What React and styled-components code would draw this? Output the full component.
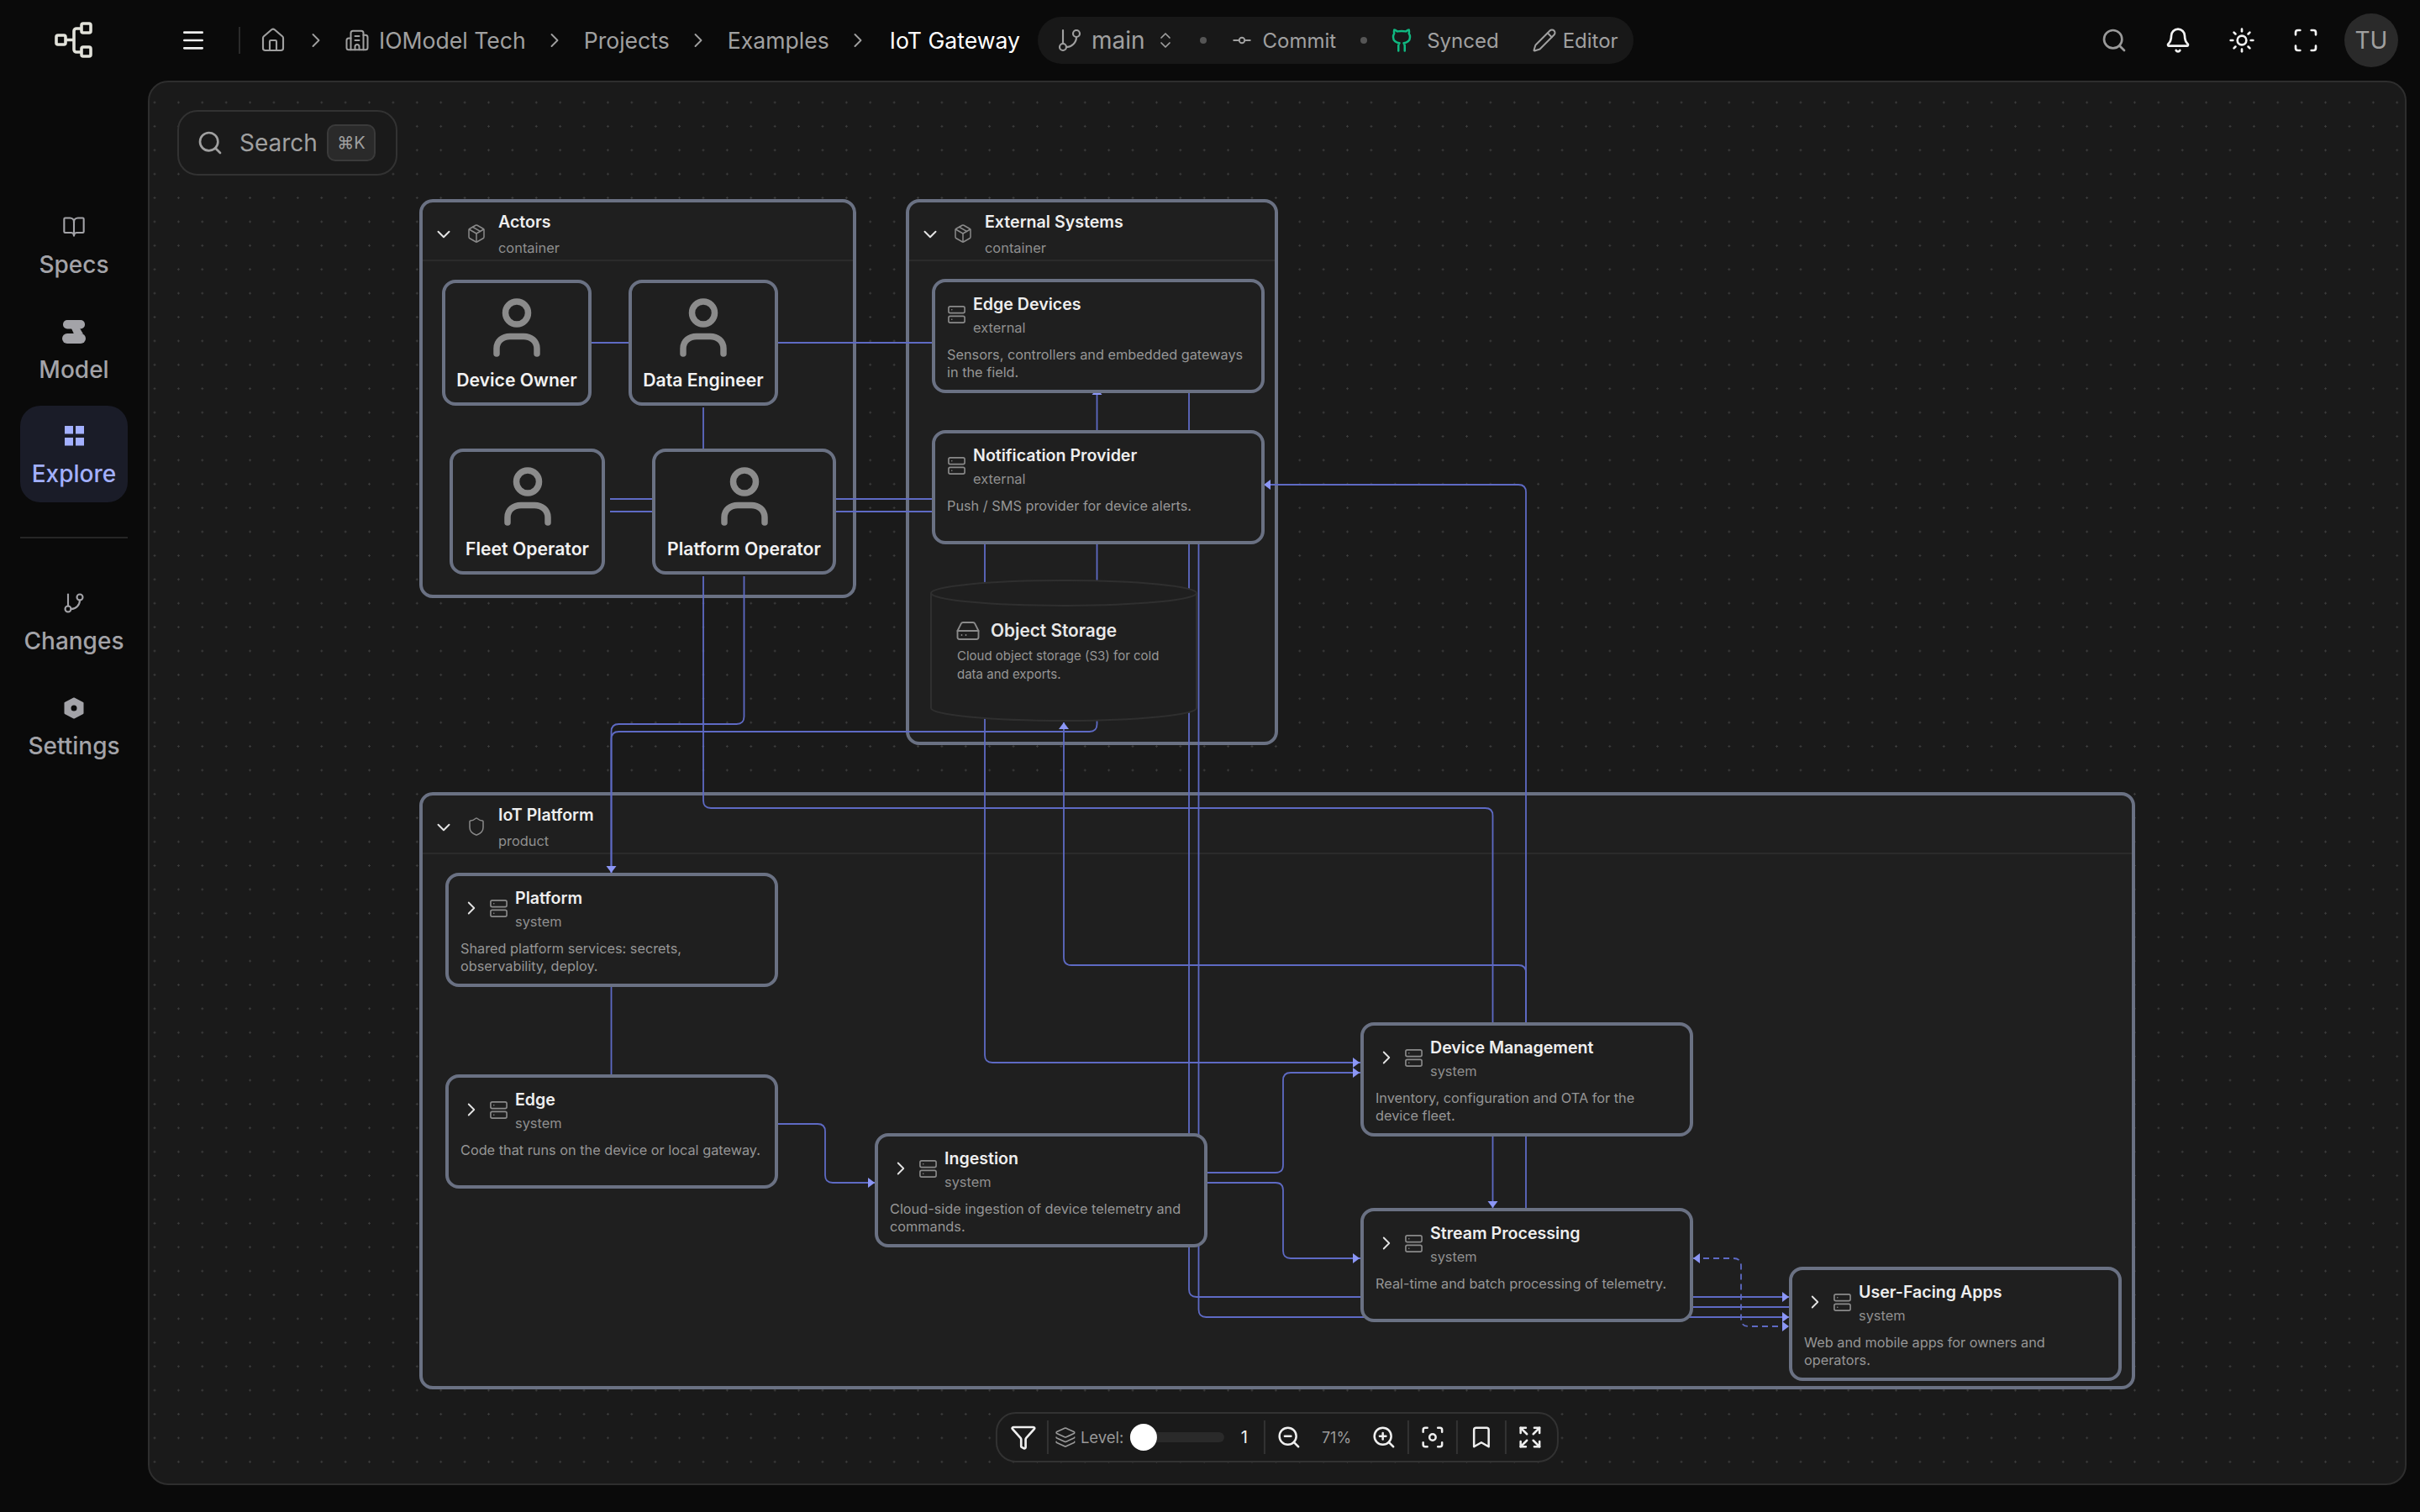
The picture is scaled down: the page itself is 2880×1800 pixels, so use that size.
import React from 'react';
import styled, {createGlobalStyle} from 'styled-components';
import {
    Menu, House, Building2, ChevronRight, ChevronDown, ChevronsUpDown, GitBranch, GitCommitHorizontal,
    Pencil, Search, Bell, Sun, Scan, BookOpen, Funnel, Layers, ZoomIn, ZoomOut, Focus, Bookmark, Expand,
    Package, Shield, Server, HardDrive,
} from 'lucide-react';

const groups = [
    {title: 'Actors', sub: 'container', x: 499, y: 237, w: 520, h: 475, icon: Package},
    {title: 'External Systems', sub: 'container', x: 1078, y: 237, w: 443, h: 650, icon: Package},
    {title: 'IoT Platform', sub: 'product', x: 499, y: 943, w: 2042, h: 711, icon: Shield},
];

const people = [
    {name: 'Device Owner', x: 526, y: 333, w: 178},
    {name: 'Data Engineer', x: 748, y: 333, w: 178},
    {name: 'Fleet Operator', x: 535, y: 534, w: 185},
    {name: 'Platform Operator', x: 776, y: 534, w: 219},
];

const cards = [
    {title: 'Edge Devices', sub: 'external', x: 1109, y: 332, desc: 'Sensors, controllers and embedded gateways in the field.'},
    {title: 'Notification Provider', sub: 'external', x: 1109, y: 512, desc: 'Push / SMS provider for device alerts.'},
    {title: 'Platform', sub: 'system', x: 530, y: 1039, open: true, desc: 'Shared platform services: secrets, observability, deploy.'},
    {title: 'Edge', sub: 'system', x: 530, y: 1279, open: true, desc: 'Code that runs on the device or local gateway.'},
    {title: 'Ingestion', sub: 'system', x: 1041, y: 1349, open: true, desc: 'Cloud-side ingestion of device telemetry and commands.'},
    {title: 'Device Management', sub: 'system', x: 1619, y: 1217, open: true, desc: 'Inventory, configuration and OTA for the device fleet.'},
    {title: 'Stream Processing', sub: 'system', x: 1619, y: 1438, open: true, desc: 'Real-time and batch processing of telemetry.'},
    {title: 'User-Facing Apps', sub: 'system', x: 2129, y: 1508, open: true, desc: 'Web and mobile apps for owners and operators.'},
];

const edges = [
    [[704, 408], [748, 408]],
    [[926, 408], [1109, 408]],
    [[837, 485], [837, 534]],
    [[726, 594], [776, 594]],
    [[726, 609], [776, 609]],
    [[995, 594], [1109, 594]],
    [[995, 609], [1109, 609]],
    [[1305.5, 468], [1305.5, 512]],
    [[1415, 468], [1415, 512]],
    [[1172, 647], [1172, 1265], [1619, 1265]],
    [[1305.5, 647], [1305.5, 871], [727.5, 871], [727.5, 1039]],
    [[885.5, 686], [885.5, 862], [727.5, 862], [727.5, 1039]],
    [[837, 686], [837, 962], [1776.5, 962], [1776.5, 1438]],
    [[1415, 647], [1415, 1544], [2129, 1544]],
    [[1426.5, 647], [1426.5, 1568], [2129, 1568]],
    [[2015, 1556], [2129, 1556]],
    [[1816, 1438], [1816, 577], [1504, 577]],
    [[1266, 860], [1266, 1149], [1816, 1149], [1816, 1217]],
    [[727.5, 1174], [727.5, 1279]],
    [[925, 1338], [982, 1338], [982, 1408], [1041, 1408]],
    [[1435, 1396], [1527, 1396], [1527, 1277], [1619, 1277]],
    [[1435, 1408], [1527, 1408], [1527, 1498], [1619, 1498]],
];

const dashed = [[2015, 1498], [2072, 1498], [2072, 1579], [2129, 1579]];

// tip x, tip y, direction
const arrows = [
    [1618, 1265, 'r'], [1618, 1277, 'r'], [1618, 1498, 'r'],
    [1041, 1408, 'r'], [2129, 1544, 'r'], [2129, 1568, 'r'], [2129, 1579, 'r'],
    [2015, 1498, 'l'], [1504, 577, 'l'],
    [727.5, 1039, 'd'], [1776.5, 1438, 'd'],
    [1266, 860, 'u'], [1305.5, 462, 'u'],
];

const route = (pts, r = 9) => {
    let d = `M${pts[0][0]} ${pts[0][1]}`;
    for (let i = 1; i < pts.length; i++) {
        const [x, y] = pts[i];
        if (i === pts.length - 1) {
            d += ` L${x} ${y}`;
            break;
        }
        const [px, py] = pts[i - 1];
        const [nx, ny] = pts[i + 1];
        const inX = Math.sign(x - px), inY = Math.sign(y - py);
        const outX = Math.sign(nx - x), outY = Math.sign(ny - y);
        d += ` L${x - inX * r} ${y - inY * r} Q${x} ${y} ${x + outX * r} ${y + outY * r}`;
    }
    return d;
};

const arrowPoints = ([x, y, dir]) => {
    if (dir === 'r') return `${x},${y} ${x - 8},${y - 6} ${x - 8},${y + 6}`;
    if (dir === 'l') return `${x},${y} ${x + 8},${y - 6} ${x + 8},${y + 6}`;
    if (dir === 'd') return `${x},${y} ${x - 6},${y - 8} ${x + 6},${y - 8}`;
    return `${x},${y} ${x - 6},${y + 8} ${x + 6},${y + 8}`;
};

const Logo = () => (
    <svg width="48" height="44" viewBox="0 0 48 44" fill="none" stroke="#e2e2da" strokeWidth="3.6" strokeLinejoin="round">
        <rect x="3" y="16" width="11" height="11" rx="2"/>
        <rect x="33" y="2" width="11" height="11" rx="2"/>
        <rect x="33" y="30" width="11" height="11" rx="2"/>
        <path d="M14 21.5h10M33 8h-6a3 3 0 0 0-3 3v22a3 3 0 0 0 3 3h6"/>
    </svg>
);

const GithubIcon = () => (
    <svg width="30" height="30" viewBox="0 0 24 24" fill="none" stroke="#10b981" strokeWidth="2" strokeLinecap="round" strokeLinejoin="round">
        <path d="M15 22v-4a4.8 4.8 0 0 0-1-3.5c3 0 6-2 6-5.5.08-1.25-.27-2.48-1-3.5.28-1.15.28-2.35 0-3.5 0 0-1 0-3 1.5-2.64-.5-5.36-.5-8 0C6 2 5 2 5 2c-.3 1.15-.3 2.35 0 3.5A5.403 5.403 0 0 0 4 9c0 3.5 3 5.5 6 5.5-.39.49-.68 1.05-.85 1.65-.17.6-.22 1.23-.15 1.85v4"/>
    </svg>
);

const ModelIcon = () => (
    <svg width="28" height="28" viewBox="0 0 28 28" fill="currentColor">
        <rect x="1" y="0" width="26" height="10.500" rx="5"/>
        <rect x="0" y="16" width="28" height="12" rx="6"/>
        <path d="M11 10h10l4 6.500H14z"/>
    </svg>
);

const ExploreIcon = () => (
    <svg width="28" height="28" viewBox="0 0 28 28" fill="currentColor">
        <rect x="3" y="2" width="10" height="9.5"/>
        <rect x="16" y="2" width="10" height="9.5"/>
        <rect x="3" y="16" width="10" height="9.5"/>
        <rect x="16" y="16" width="10" height="9.5"/>
    </svg>
);

const SettingsIcon = () => (
    <svg width="28" height="28" viewBox="0 0 28 28" fill="currentColor">
        <path fillRule="evenodd" stroke="currentColor" strokeWidth="2" strokeLinejoin="round"
              d="M14 2.5 24.5 8v12L14 25.500 3.500 20V8zM14 9.500a4.500 4.500 0 1 0 0 9 4.500 4.500 0 0 0 0-9z"/>
    </svg>
);

const PersonIcon = () => (
    <svg width="64" height="70" viewBox="0 0 64 70" fill="none" stroke="#8b8b8b" strokeWidth="7.500" strokeLinecap="round">
        <circle cx="32" cy="17.500" r="13.500"/>
        <path d="M8 66V60C8 51 15 45.500 24 45.500H40C49 45.500 56 51 56 60V66"/>
    </svg>
);

const App = () => {
    return (
        <Page>
            <GlobalStyle/>
            <Sidebar>
                <LogoWrap><Logo/></LogoWrap>
                <Nav>
                    <NavItem><BookOpen size={30} strokeWidth={1.8}/><span>Specs</span></NavItem>
                    <NavItem><ModelIcon/><span>Model</span></NavItem>
                    <NavItem $active><ExploreIcon/><span>Explore</span></NavItem>
                    <NavDivider/>
                    <NavItem><GitBranch size={30} strokeWidth={1.8}/><span>Changes</span></NavItem>
                    <NavItem><SettingsIcon/><span>Settings</span></NavItem>
                </Nav>
            </Sidebar>
            <Main>
                <TopBar>
                    <Menu size={32} color="#efefef"/>
                    <VDivider/>
                    <Crumbs>
                        <House size={32} strokeWidth={1.6}/>
                        <ChevronRight size={28} strokeWidth={1.6}/>
                        <Crumb>
                            <Building2 size={30} strokeWidth={1.6}/>
                            IOModel Tech
                        </Crumb>
                        <ChevronRight size={28} strokeWidth={1.6}/>
                        <Crumb>Projects</Crumb>
                        <ChevronRight size={28} strokeWidth={1.6}/>
                        <Crumb>Examples</Crumb>
                        <ChevronRight size={28} strokeWidth={1.6}/>
                        <Crumb $current>IoT Gateway</Crumb>
                    </Crumbs>
                    <Pill>
                        <GitBranch size={32} strokeWidth={1.6}/>
                        <BranchName>main</BranchName>
                        <ChevronsUpDown size={24} strokeWidth={1.7}/>
                        <PillDot/>
                        <PillItem>
                            <GitCommitHorizontal size={26} strokeWidth={1.8}/>
                            Commit
                        </PillItem>
                        <PillDot $right={26}/>
                        <PillItem $gap={15}>
                            <GithubIcon/>
                            Synced
                        </PillItem>
                        <PillItem $gap={7} $left={39}>
                            <Pencil size={30} strokeWidth={1.6}/>
                            Editor
                        </PillItem>
                    </Pill>
                    <Actions>
                        <IconButton $muted><Search size={32} strokeWidth={2}/></IconButton>
                        <IconButton><Bell size={32} strokeWidth={2}/></IconButton>
                        <IconButton><Sun size={32} strokeWidth={2}/></IconButton>
                        <IconButton><Scan size={32} strokeWidth={2}/></IconButton>
                        <Avatar>TU</Avatar>
                    </Actions>
                </TopBar>
                <Canvas>
                    <Diagram>
                        {groups.map(g => (
                            <GroupBox key={g.title} $x={g.x} $y={g.y} $w={g.w} $h={g.h}>
                                <GroupHeader>
                                    <ChevronDown size={26} color="#e4e4e4" strokeWidth={1.8}/>
                                    <g.icon size={24} color="#8a8a8a" strokeWidth={1.5}/>
                                    <div>
                                        <NodeTitle>{g.title}</NodeTitle>
                                        <GroupSub>{g.sub}</GroupSub>
                                    </div>
                                </GroupHeader>
                            </GroupBox>
                        ))}
                        <EdgeLayer width="2880" height="1800" viewBox="0 0 2880 1800" fill="none">
                            {edges.map((pts, i) => (
                                <path key={i} d={route(pts)} stroke="#5e6ac4" strokeWidth="1.8"/>
                            ))}
                            <path d={route(dashed)} stroke="#5e6ac4" strokeWidth="1.8" strokeDasharray="7 5"/>
                            {arrows.map((a, i) => (
                                <polygon key={i} points={arrowPoints(a)} fill="#8b96f5"/>
                            ))}
                        </EdgeLayer>
                        {people.map(p => (
                            <PersonCard key={p.name} $x={p.x} $y={p.y} $w={p.w}>
                                <PersonIcon/>
                                <PersonName>{p.name}</PersonName>
                            </PersonCard>
                        ))}
                        {cards.map(c => (
                            <Card key={c.title} $x={c.x} $y={c.y}>
                                <CardHeader>
                                    {c.open && <ChevronRight size={26} color="#e4e4e4" strokeWidth={1.7}/>}
                                    <Server size={23} color="#8a8a8a" strokeWidth={1.7}/>
                                    <div>
                                        <NodeTitle>{c.title}</NodeTitle>
                                        <NodeSub>{c.sub}</NodeSub>
                                    </div>
                                </CardHeader>
                                <NodeDesc>{c.desc}</NodeDesc>
                            </Card>
                        ))}
                        <Cylinder>
                            <svg width="318" height="170" viewBox="0 0 318 170" fill="#1f1f1f" stroke="#2f2f2f" strokeWidth="2">
                                <path d="M1 16V153C1 161 72 168 159 168S317 161 317 153V16"/>
                                <ellipse cx="159" cy="16" rx="158" ry="15"/>
                            </svg>
                            <CylinderBody>
                                <CylinderTitle>
                                    <HardDrive size={30} color="#8a8a8a" strokeWidth={1.5}/>
                                    Object Storage
                                </CylinderTitle>
                                <CylinderDesc>Cloud object storage (S3) for cold data and exports.</CylinderDesc>
                            </CylinderBody>
                        </Cylinder>
                    </Diagram>
                    <SearchBox>
                        <Search size={32} strokeWidth={2}/>
                        <span>Search</span>
                        <Kbd>⌘K</Kbd>
                    </SearchBox>
                    <Toolbar>
                        <Funnel size={32} color="#efefef" strokeWidth={2}/>
                        <ToolSep $left={12} $right={7}/>
                        <Layers size={26} strokeWidth={1.5}/>
                        <ToolLabel>Level:</ToolLabel>
                        <Track><Thumb/></Track>
                        <LevelValue>1</LevelValue>
                        <ToolSep/>
                        <ZoomOut size={30} color="#efefef" strokeWidth={2}/>
                        <ZoomValue>71%</ZoomValue>
                        <ZoomIn size={30} color="#efefef" strokeWidth={2}/>
                        <ToolSep/>
                        <Focus size={30} color="#efefef" strokeWidth={2}/>
                        <ToolSep/>
                        <Bookmark size={30} color="#efefef" strokeWidth={2}/>
                        <ToolSep/>
                        <Expand size={30} color="#efefef" strokeWidth={2}/>
                    </Toolbar>
                </Canvas>
            </Main>
        </Page>
    );
};

export default App;

const GlobalStyle = createGlobalStyle`
  html, body {
    margin: 0;
    padding: 0;
    background: #0a0a0a;
  }
  * {
    box-sizing: border-box;
  }
  svg {
    flex-shrink: 0;
  }
`;

const Page = styled.div`
  width: 2880px;
  height: 1800px;
  display: flex;
  background: #0a0a0a;
  font-family: Inter, "Noto Sans", sans-serif;
  overflow: hidden;
`;

const Sidebar = styled.aside`
  width: 176px;
  flex-shrink: 0;
  display: flex;
  flex-direction: column;
  align-items: center;
`;

const LogoWrap = styled.div`
  height: 96px;
  display: flex;
  align-items: center;
  justify-content: center;
`;

const Nav = styled.nav`
  margin-top: 138px;
  display: flex;
  flex-direction: column;
  gap: 9.5px;
`;

const NavItem = styled.div`
  width: 128px;
  height: 115px;
  padding-top: 22px;
  border-radius: 24px;
  display: flex;
  flex-direction: column;
  align-items: center;
  gap: 14px;
  font-size: 28px;
  font-weight: 500;
  line-height: 34px;
  color: ${({$active}) => ($active ? '#a3b0ff' : '#a3a3a8')};
  background: ${({$active}) => ($active ? '#1a1c28' : 'transparent')};

  svg {
    height: 28px;
  }
`;

const NavDivider = styled.div`
  height: 2px;
  background: #262626;
  margin: 31.5px 0;
`;

const Main = styled.div`
  flex: 1;
  min-width: 0;
  display: flex;
  flex-direction: column;
  padding: 0 16px 32px 0;
`;

const TopBar = styled.header`
  height: 96px;
  flex-shrink: 0;
  display: flex;
  align-items: center;
  padding-left: 38px;
  margin-right: -16px;
`;

const VDivider = styled.div`
  width: 2px;
  height: 32px;
  background: #2a2a2a;
  margin: 0 23px 0 38px;
`;

const Crumbs = styled.div`
  display: flex;
  align-items: center;
  gap: 20.5px;
  color: #a0a0a0;
`;

const Crumb = styled.span`
  display: flex;
  align-items: center;
  gap: 11px;
  font-size: 26.6px;
  margin-left: ${({$current}) => ($current ? 3 : 0)}px;
  color: ${({$current}) => ($current ? '#ffffff' : '#a0a0a0')};
`;

const Pill = styled.div`
  height: 56px;
  margin-left: 21px;
  padding: 0 18px 0 22px;
  border-radius: 28px;
  background: #181818;
  display: flex;
  align-items: center;
  color: #a0a0a0;
`;

const BranchName = styled.span`
  font-size: 28px;
  margin: 0 12px 0 10px;
`;

const PillDot = styled.i`
  width: 8px;
  height: 8px;
  border-radius: 50%;
  background: #555;
  margin: 0 ${({$right}) => $right ?? 29}px 0 29px;
`;

const PillItem = styled.span`
  display: flex;
  align-items: center;
  gap: ${({$gap}) => $gap ?? 12}px;
  margin-left: ${({$left}) => $left ?? 0}px;
  font-size: 24px;
`;

const Actions = styled.div`
  margin-left: auto;
  padding-right: 26px;
  display: flex;
  align-items: center;
`;

const IconButton = styled.button`
  width: 76px;
  height: 64px;
  padding: 0;
  border: none;
  background: none;
  display: flex;
  align-items: center;
  justify-content: center;
  color: ${({$muted}) => ($muted ? '#9a9a9a' : '#f2f2f2')};
`;

const Avatar = styled.div`
  width: 64px;
  height: 64px;
  margin-left: 8px;
  border-radius: 50%;
  background: #2a2a2a;
  color: #a0a0a0;
  font-size: 28px;
  display: flex;
  align-items: center;
  justify-content: center;
`;

const Canvas = styled.main`
  position: relative;
  flex: 1;
  border: 2px solid #2e2e2e;
  border-radius: 24px;
  background-color: #1a1a1a;
  background-image: radial-gradient(circle, #3c3c3c 1px, transparent 1.4px);
  background-size: 28.4px 28.4px;
  background-position: -8.2px 9.8px;
`;

// page coordinates: the layer cancels the panel's own offset so node data reads as screen positions
const Diagram = styled.div`
  position: absolute;
  left: -178px;
  top: -98px;
  width: 2880px;
  height: 1800px;
`;

const EdgeLayer = styled.svg`
  position: absolute;
  left: 0;
  top: 0;
  z-index: 2;
`;

const GroupBox = styled.section`
  position: absolute;
  z-index: 1;
  left: ${({$x}) => $x}px;
  top: ${({$y}) => $y}px;
  width: ${({$w}) => $w}px;
  height: ${({$h}) => $h}px;
  background: #1f1f1f;
  border: 4px solid #6a7183;
  border-radius: 16px;
`;

const GroupHeader = styled.header`
  height: 70px;
  padding: 11px 0 0 12px;
  border-bottom: 2px solid #2b2b2b;
  display: flex;
  align-items: flex-start;
  gap: 14px;

  > svg {
    margin-top: 14px;
  }
`;

const NodeTitle = styled.div`
  font-size: 19.6px;
  font-weight: 600;
  line-height: 24px;
  color: #eeeeee;
  white-space: nowrap;
`;

const GroupSub = styled.div`
  margin-top: 8px;
  font-size: 16.4px;
  line-height: 22px;
  color: #8f8f8f;
`;

const PersonCard = styled.div`
  position: absolute;
  z-index: 3;
  left: ${({$x}) => $x}px;
  top: ${({$y}) => $y}px;
  width: ${({$w}) => $w}px;
  height: 150px;
  padding-top: 18px;
  background: #1f1f1f;
  border: 4px solid #6a7183;
  border-radius: 16px;
  display: flex;
  flex-direction: column;
  align-items: center;
`;

const PersonName = styled.div`
  margin-top: 14px;
  font-size: 21.2px;
  font-weight: 600;
  line-height: 26px;
  color: #f2f2f2;
  white-space: nowrap;
`;

const Card = styled.article`
  position: absolute;
  z-index: 3;
  left: ${({$x}) => $x}px;
  top: ${({$y}) => $y}px;
  width: 396px;
  height: 136px;
  padding: 14px 12px 0 14px;
  background: #1f1f1f;
  border: 4px solid #6a7183;
  border-radius: 16px;
`;

const CardHeader = styled.header`
  display: flex;
  align-items: center;
  gap: 8px;

  > svg {
    margin-top: -3px;
  }
`;

const NodeSub = styled.div`
  margin-top: 5px;
  font-size: 16.4px;
  line-height: 22px;
  color: #8f8f8f;
`;

const NodeDesc = styled.p`
  margin: 11px 0 0;
  font-size: 16.3px;
  line-height: 21px;
  color: #969696;
`;

const Cylinder = styled.div`
  position: absolute;
  z-index: 3;
  left: 1107px;
  top: 690px;
  width: 318px;
  height: 170px;

  > svg {
    position: absolute;
    left: 0;
    top: 0;
  }
`;

const CylinderBody = styled.div`
  position: relative;
  padding: 46px 30px 0 32px;
`;

const CylinderTitle = styled.div`
  display: flex;
  align-items: center;
  gap: 12px;
  font-size: 20.8px;
  font-weight: 600;
  line-height: 30px;
  color: #e8e8e8;
  margin-left: -2px;
`;

const CylinderDesc = styled.p`
  margin: 4px 0 0;
  font-size: 15px;
  line-height: 22px;
  color: #969696;
`;

const SearchBox = styled.div`
  position: absolute;
  z-index: 4;
  left: 33px;
  top: 33px;
  width: 262px;
  height: 78px;
  padding: 0 0 0 21px;
  border: 2px solid #323232;
  border-radius: 24px;
  background: #1a1a1a;
  display: flex;
  align-items: center;
  gap: 19px;
  color: #a0a0a0;
  font-size: 28px;
`;

const Kbd = styled.kbd`
  width: 58px;
  height: 44px;
  margin-left: -8px;
  border: 2px solid #3a3a3a;
  border-radius: 10px;
  background: #2a2a2a;
  font-family: Inter, "DejaVu Sans", sans-serif;
  font-size: 20px;
  display: flex;
  align-items: center;
  justify-content: center;
`;

const Toolbar = styled.div`
  position: absolute;
  z-index: 4;
  left: 50%;
  bottom: 25px;
  transform: translateX(-50%);
  height: 60px;
  padding: 0 17px 0 15px;
  border: 2px solid #323232;
  border-radius: 24px;
  background: #1a1a1a;
  display: flex;
  align-items: center;
  color: #999999;
  white-space: nowrap;
`;

const ToolSep = styled.div`
  width: 2px;
  height: 40px;
  background: #333333;
  margin: 0 ${({$right}) => $right ?? 13}px 0 ${({$left}) => $left ?? 13}px;
`;

const ToolLabel = styled.span`
  width: 55px;
  margin: 0 4px 0 5px;
  font-size: 18.5px;
`;

const Track = styled.div`
  position: relative;
  width: 112px;
  height: 12px;
  border-radius: 6px;
  background: #2a2a2a;
`;

const Thumb = styled.div`
  position: absolute;
  left: 0;
  top: -10px;
  width: 32px;
  height: 32px;
  border-radius: 50%;
  background: #ffffff;
`;

const LevelValue = styled.span`
  width: 20px;
  margin-left: 14px;
  text-align: center;
  font-size: 20px;
  color: #f2f2f2;
`;

const ZoomValue = styled.span`
  margin: 0 24px;
  font-size: 18px;
`;
